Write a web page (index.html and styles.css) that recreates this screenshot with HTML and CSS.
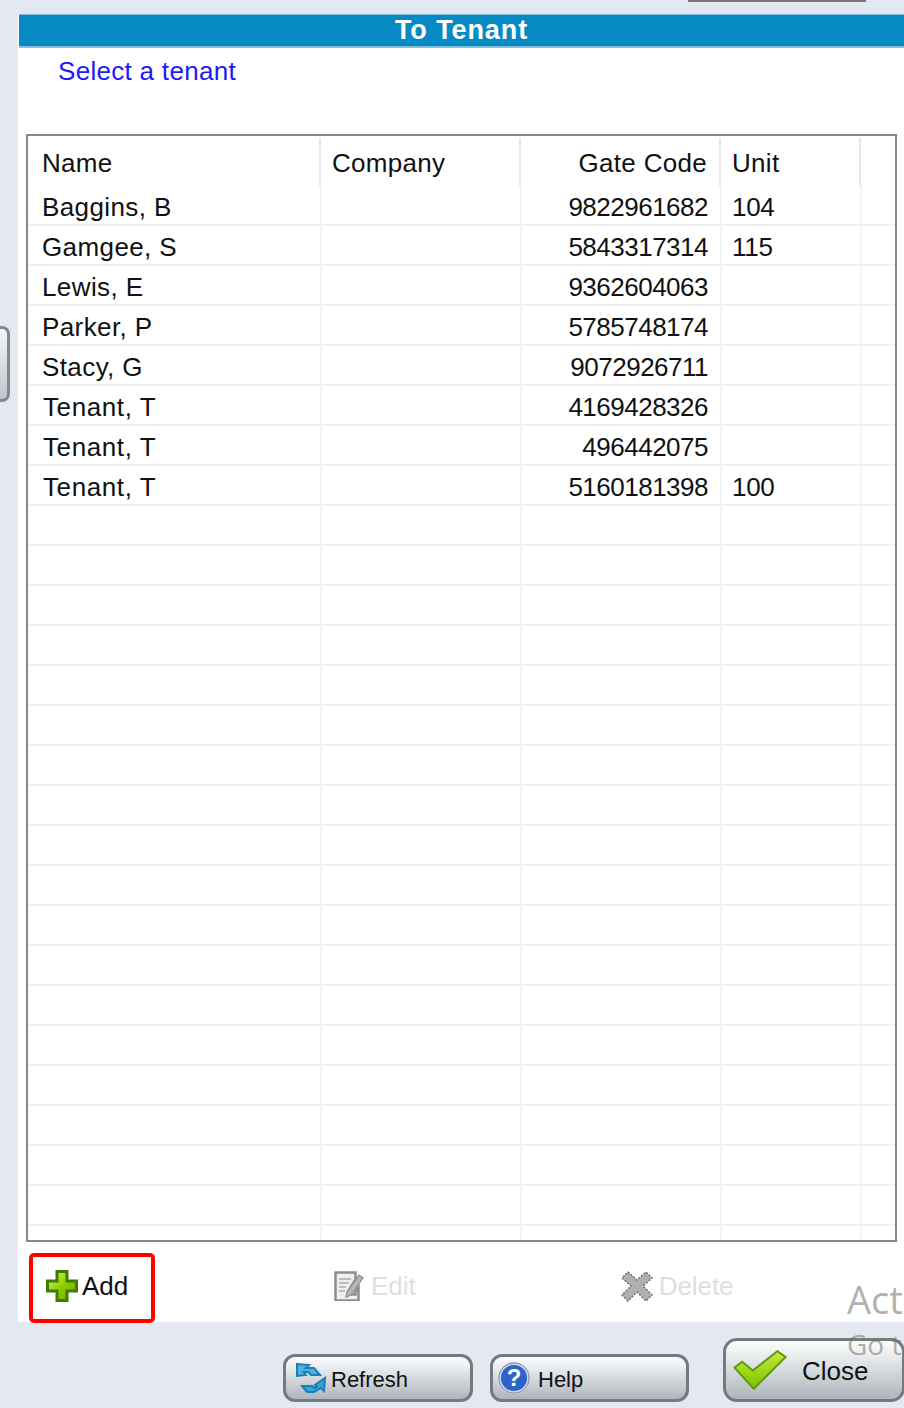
FILE: index.html
```html
<!DOCTYPE html>
<html lang="en">
<head>
<meta charset="utf-8">
<title>To Tenant</title>
<link rel="stylesheet" href="styles.css">
</head>
<body>
<div class="page">
  <div class="top-stub"></div>
  <div class="middle">
    <div class="side"><div class="side-stub"></div></div>
    <main class="panel">
      <h1 class="title">To Tenant</h1>
      <p class="hint">Select a tenant</p>
      <div class="grid-box">
        <div class="head">
          <div class="hcell">Name</div>
          <div class="hcell hcell-company">Company</div>
          <div class="hcell hnum">Gate Code</div>
          <div class="hcell hcell-unit">Unit</div>
        </div>
        <div class="row"><div class="cell">Baggins, B</div><div class="cell"></div><div class="cell num">9822961682</div><div class="cell val">104</div><div class="cell"></div></div>
        <div class="row"><div class="cell">Gamgee, S</div><div class="cell"></div><div class="cell num">5843317314</div><div class="cell val">115</div><div class="cell"></div></div>
        <div class="row"><div class="cell">Lewis, E</div><div class="cell"></div><div class="cell num">9362604063</div><div class="cell"></div><div class="cell"></div></div>
        <div class="row"><div class="cell">Parker, P</div><div class="cell"></div><div class="cell num">5785748174</div><div class="cell"></div><div class="cell"></div></div>
        <div class="row"><div class="cell">Stacy, G</div><div class="cell"></div><div class="cell num">9072926711</div><div class="cell"></div><div class="cell"></div></div>
        <div class="row"><div class="cell tenant">Tenant, T</div><div class="cell"></div><div class="cell num">4169428326</div><div class="cell"></div><div class="cell"></div></div>
        <div class="row"><div class="cell tenant">Tenant, T</div><div class="cell"></div><div class="cell num">496442075</div><div class="cell"></div><div class="cell"></div></div>
        <div class="row"><div class="cell tenant">Tenant, T</div><div class="cell"></div><div class="cell num">5160181398</div><div class="cell val">100</div><div class="cell"></div></div>
        <div class="row"><div class="cell"></div><div class="cell"></div><div class="cell"></div><div class="cell"></div><div class="cell"></div></div>
        <div class="row"><div class="cell"></div><div class="cell"></div><div class="cell"></div><div class="cell"></div><div class="cell"></div></div>
        <div class="row"><div class="cell"></div><div class="cell"></div><div class="cell"></div><div class="cell"></div><div class="cell"></div></div>
        <div class="row"><div class="cell"></div><div class="cell"></div><div class="cell"></div><div class="cell"></div><div class="cell"></div></div>
        <div class="row"><div class="cell"></div><div class="cell"></div><div class="cell"></div><div class="cell"></div><div class="cell"></div></div>
        <div class="row"><div class="cell"></div><div class="cell"></div><div class="cell"></div><div class="cell"></div><div class="cell"></div></div>
        <div class="row"><div class="cell"></div><div class="cell"></div><div class="cell"></div><div class="cell"></div><div class="cell"></div></div>
        <div class="row"><div class="cell"></div><div class="cell"></div><div class="cell"></div><div class="cell"></div><div class="cell"></div></div>
        <div class="row"><div class="cell"></div><div class="cell"></div><div class="cell"></div><div class="cell"></div><div class="cell"></div></div>
        <div class="row"><div class="cell"></div><div class="cell"></div><div class="cell"></div><div class="cell"></div><div class="cell"></div></div>
        <div class="row"><div class="cell"></div><div class="cell"></div><div class="cell"></div><div class="cell"></div><div class="cell"></div></div>
        <div class="row"><div class="cell"></div><div class="cell"></div><div class="cell"></div><div class="cell"></div><div class="cell"></div></div>
        <div class="row"><div class="cell"></div><div class="cell"></div><div class="cell"></div><div class="cell"></div><div class="cell"></div></div>
        <div class="row"><div class="cell"></div><div class="cell"></div><div class="cell"></div><div class="cell"></div><div class="cell"></div></div>
        <div class="row"><div class="cell"></div><div class="cell"></div><div class="cell"></div><div class="cell"></div><div class="cell"></div></div>
        <div class="row"><div class="cell"></div><div class="cell"></div><div class="cell"></div><div class="cell"></div><div class="cell"></div></div>
        <div class="row"><div class="cell"></div><div class="cell"></div><div class="cell"></div><div class="cell"></div><div class="cell"></div></div>
        <div class="row"><div class="cell"></div><div class="cell"></div><div class="cell"></div><div class="cell"></div><div class="cell"></div></div>
        <div class="row"><div class="cell"></div><div class="cell"></div><div class="cell"></div><div class="cell"></div><div class="cell"></div></div>
      </div>
      <div class="toolbar">
        <button class="tool tool-add">
          <svg class="icon-add" viewBox="0 0 32 32" width="32" height="32"><defs><linearGradient id="plusFill" x1="0" y1="0" x2="1" y2="1"><stop offset="0" stop-color="#d8f36a"/><stop offset=".5" stop-color="#8fd000"/><stop offset="1" stop-color="#5aa400"/></linearGradient></defs><path d="M11 1.500h10v9.500h9.500v10H21v9.500H11V21H1.500V11H11z" fill="url(#plusFill)" stroke="#3f7a02" stroke-width="3"/></svg>
          <span>Add</span>
        </button>
        <button class="tool tool-edit" disabled>
          <svg viewBox="0 0 30 30" width="30" height="30"><path d="M1.500 1.500h20v7l-7 11v4h7v-3l3-4v13h-23z" fill="#eeeeee" stroke="#8d8d8d" stroke-width="2.500"/><path d="M5 8h12M5 12h10M5 16h7M5 20h6" stroke="#bdbdbd" stroke-width="2"/><path d="M13 21l12-17 4 3-12 17-5 2z" fill="#b5b5b5" stroke="#8a8a8a" stroke-width="1.200"/></svg>
          <span>Edit</span>
        </button>
        <button class="tool tool-delete" disabled>
          <svg viewBox="0 0 32 32" width="32" height="32"><path d="M7 2l9 8 9-8 6 6-9 8 9 9-6 6-9-9-9 9-6-6 9-9-9-8z" fill="#b0b0b0" stroke="#6f6f6f" stroke-width="1.500" stroke-dasharray="2 1.500"/></svg>
          <span>Delete</span>
        </button>
      </div>
    </main>
  </div>
  <div class="footer">
    <button class="btn btn-refresh">
      <svg viewBox="0 0 32 32" width="32" height="32"><path d="M2 2l12 1-3 3h8l6 7h-9l-3-3h-4l2 3-9 1z" fill="#4db2e2" stroke="#1b7fb6" stroke-width="2"/><path d="M30 16l-1 13-3-3-7 4H12l-5-6h10l3 2 2-1-2-2z" fill="#37a4d8" stroke="#1b7fb6" stroke-width="2"/></svg>
      <span>Refresh</span>
    </button>
    <button class="btn btn-help">
      <svg viewBox="0 0 32 32" width="32" height="32"><circle cx="16" cy="16" r="14.500" fill="#2f62c8" stroke="#c9d7ec" stroke-width="3"/><circle cx="16" cy="16" r="15.200" fill="none" stroke="#7f8ea8" stroke-width="1"/><text x="16" y="24" text-anchor="middle" class="q">?</text></svg>
      <span>Help</span>
    </button>
    <button class="btn btn-close">
      <svg viewBox="0 0 56 42" width="54" height="41"><defs><linearGradient id="checkFill" x1="0" y1="0" x2="0" y2="1"><stop offset="0" stop-color="#c8ea3a"/><stop offset="1" stop-color="#79c300"/></linearGradient></defs><path d="M1.500 18l8-6 11 9L46 1l8.500 6-33 33z" fill="url(#checkFill)" stroke="#5d9a0c" stroke-width="2"/></svg>
      <span>Close</span>
    </button>
  </div>
  <div class="watermark" aria-hidden="true">
    <div class="wm-big">Act</div>
    <div class="wm-small">Go t</div>
  </div>
</div>
</body>
</html>
```

FILE: styles.css
```css
* { box-sizing: border-box; }
html, body { margin: 0; padding: 0; }
body {
  background: #e4e9f1;
  font-family: "Liberation Sans", Arial, sans-serif;
  color: #111;
}
.page {
  position: relative;
  width: 904px;
  height: 1408px;
  overflow: hidden;
  display: flex;
  flex-direction: column;
}
.top-stub {
  width: 178px;
  height: 2px;
  margin-left: 688px;
  background: #77777c;
  flex: none;
}
.middle {
  display: flex;
  margin-top: 12px;
  height: 1308px;
  flex: none;
}
.side { width: 18px; flex: none; padding-top: 312px; }
.side-stub {
  width: 10px;
  height: 76px;
  border: 3px solid #84878c;
  border-left: 0;
  border-radius: 0 8px 8px 0;
  background: linear-gradient(#f4f6f8, #c0c6cc);
}
.panel {
  width: 886px;
  flex: none;
  background: #fff;
}
.title {
  margin: 0 0 0 1px;
  height: 34px;
  background: #058ac4;
  border-top: 1px solid #7dbcdc;
  border-bottom: 2px solid #80c2e0;
  color: #fff;
  font-size: 27px;
  font-weight: bold;
  line-height: 30px;
  letter-spacing: .9px;
  text-align: center;
}
.hint {
  margin: 0;
  height: 86px;
  padding: 5px 0 0 40px;
  color: #1a1aff;
  font-size: 26px;
  line-height: 36px;
  letter-spacing: .3px;
}
.grid-box {
  margin-left: 8px;
  width: 871px;
  height: 1108px;
  border: 2px solid #85878f;
  overflow: hidden;
  font-size: 26px;
}
.head {
  display: grid;
  grid-template-columns: 293px 200px 200px 140px;
  height: 50px;
  padding-top: 2px;
  letter-spacing: .3px;
}
.hcell {
  border-right: 2px solid #e6e7e9;
  padding: 0 12px 0 14px;
  line-height: 50px;
  height: 48px;
}
.hcell-company { padding-left: 11px; }
.hcell-unit { padding-left: 11px; }
.hnum { text-align: right; }
.row {
  display: grid;
  grid-template-columns: 294px 200px 200px 140px 35px;
  height: 40px;
  border-bottom: 2px solid #eff0f0;
  letter-spacing: .4px;
}
.cell {
  border-right: 2px solid #f2f3f3;
  padding: 0 12px 0 14px;
  line-height: 42px;
  height: 40px;
}
.tenant { padding-left: 15px; letter-spacing: .6px; }
.num { text-align: right; letter-spacing: -.5px; }
.val { padding-left: 10px; letter-spacing: -.3px; }
.toolbar {
  display: flex;
  align-items: flex-start;
  height: 80px;
  padding: 11px 0 0 11px;
}
.tool {
  display: flex;
  align-items: center;
  gap: 4px;
  border: 0;
  background: none;
  padding: 0;
  font: inherit;
  font-size: 26px;
  line-height: 26px;
  color: #111;
}
.tool span { margin-top: -4px; }
.tool-add {
  width: 126px;
  height: 70px;
  border: 4px solid #ff0000;
  border-radius: 5px;
  padding-left: 13px;
  margin-right: 179px;
}
.tool-add svg { margin-top: -4px; }
.tool-edit { height: 70px; margin-right: 206px; gap: 7px; color: #dcdfe2; }
.tool-delete { height: 70px; gap: 6px; color: #dcdfe2; margin-left: -1px; letter-spacing: -.1px; }
.tool-edit svg, .tool-delete svg { margin-top: -4px; }
.tool svg { flex: none; display: block; }
.footer {
  display: flex;
  align-items: flex-end;
  flex: none;
  height: 80px;
  padding-left: 283px;
}
.btn {
  display: flex;
  align-items: center;
  height: 48px;
  border: 3px solid #77797e;
  border-radius: 12px;
  background: linear-gradient(#fbfcfc 0%, #e6e9ec 30%, #aeb5bb 100%);
  font: inherit;
  font-size: 22px;
  color: #111;
  padding: 0 0 0 9px;
  flex: none;
}
.btn span { position: relative; top: 2px; }
.btn-refresh { width: 190px; gap: 4px; margin-right: 17px; }
.btn-help { width: 199px; gap: 8px; margin-right: 34px; padding-left: 5px; }
.btn-close {
  width: 182px;
  height: 64px;
  font-size: 26px;
  gap: 15px;
  padding-left: 7px;
  border-radius: 14px;
}
.btn-close span { top: 1px; }
.q { fill: #fff; font-size: 24px; font-weight: bold; font-family: "Liberation Sans", sans-serif; }
.watermark {
  position: absolute;
  left: 847px;
  top: 1274px;
  color: rgba(110, 110, 110, .55);
  font-family: "Open Sans", sans-serif;
  white-space: nowrap;
  pointer-events: none;
}
.wm-big { font-size: 38px; line-height: 50px; }
.wm-small { font-size: 28px; line-height: 40px; }
```
